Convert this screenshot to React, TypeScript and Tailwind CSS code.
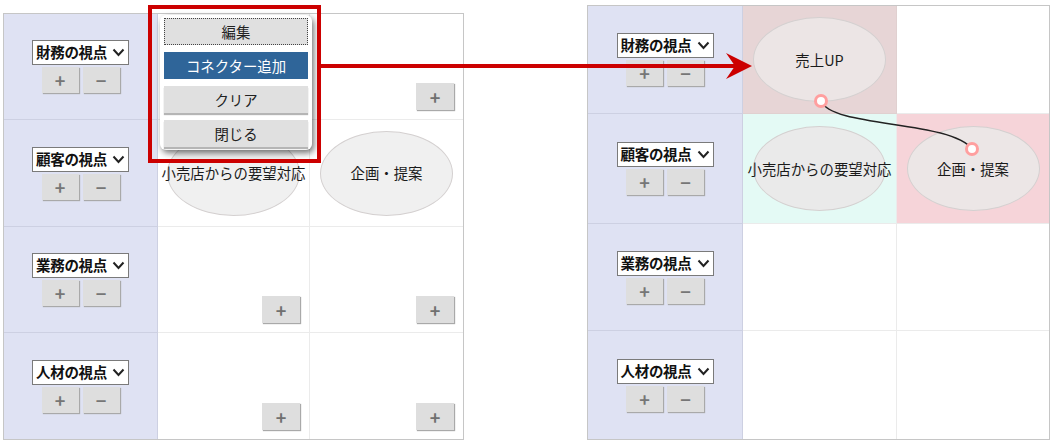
import React from 'react'

const font = { fontFamily: '"Noto Sans CJK JP", "Noto Sans", sans-serif' }

function PerspectiveSelect({ label }: { label: string }) {
  return (
    <div className="flex flex-col items-center">
      <div className="flex h-[25px] w-[97px] items-center justify-between border border-[#7a7a7a] bg-white pl-[3px] pr-[3px] text-[14.5px] font-bold leading-none text-[#111]">
        <span className="tracking-[-0.3px]">{label}</span>
        <svg width="13" height="9" viewBox="0 0 13 9">
          <polyline points="1.5,1.5 6.5,7 11.5,1.5" fill="none" stroke="#222" strokeWidth="2" />
        </svg>
      </div>
      <div className="mt-[2px] flex gap-[4px]">
        <GrayButton glyph="+" />
        <GrayButton glyph="−" />
      </div>
    </div>
  )
}

function GrayButton({ glyph }: { glyph: string }) {
  return (
    <div className="flex h-[26px] w-[37px] items-center justify-center bg-[#dedede] text-[18px] font-bold leading-none text-[#767676] shadow-[1px_1px_1px_#a9a9a9]">
      {glyph}
    </div>
  )
}

function AddButton() {
  return (
    <div className="flex h-[27px] w-[38px] items-center justify-center bg-[#dedede] text-[18px] font-bold leading-none text-[#707070] shadow-[1px_1px_1px_#a9a9a9]">
      +
    </div>
  )
}

function Oval({ text, fill }: { text: string; fill: string }) {
  return (
    <div className="relative flex h-full w-full items-center justify-center">
      <div className={`h-[85px] w-[133px] rounded-[50%] border border-[#d4d0d0] ${fill}`} />
      <span className="absolute whitespace-nowrap text-[14.4px] text-[#1a1a1a]">{text}</span>
    </div>
  )
}

export default function App() {
  const labels = ['財務の視点', '顧客の視点', '業務の視点', '人材の視点']
  const labelCell = 'flex items-center justify-center border-r border-b border-[#cdd0e2] bg-[#dfe2f3]'
  const cell = 'border-r border-b border-[#ebebeb]'
  const addCell = 'flex items-end justify-end pr-[9px] pb-[9px]'

  return (
    <div className="relative flex h-[445px] w-[1054px] items-start gap-[123px] overflow-hidden bg-white pl-[3px]" style={font}>
      {/* before */}
      <div className="mt-[13px] border border-[#c6c6c6]">
        <div className="grid grid-cols-[154px_152px_153px] grid-rows-[106px_107px_106px_106px]">
          <div className={labelCell}><PerspectiveSelect label={labels[0]} /></div>
          <div className={`${cell} ${addCell}`}><AddButton /></div>
          <div className={`${cell} ${addCell} border-r-0`}><AddButton /></div>

          <div className={labelCell}><PerspectiveSelect label={labels[1]} /></div>
          <div className={cell}><Oval text="小売店からの要望対応" fill="bg-[#f0f0f0]" /></div>
          <div className={`${cell} border-r-0`}><Oval text="企画・提案" fill="bg-[#f0f0f0]" /></div>

          <div className={labelCell}><PerspectiveSelect label={labels[2]} /></div>
          <div className={`${cell} ${addCell}`}><AddButton /></div>
          <div className={`${cell} ${addCell} border-r-0`}><AddButton /></div>

          <div className={`${labelCell} border-b-0`}><PerspectiveSelect label={labels[3]} /></div>
          <div className={`${cell} ${addCell} border-b-0`}><AddButton /></div>
          <div className={`${cell} ${addCell} border-r-0 border-b-0`}><AddButton /></div>
        </div>
      </div>

      {/* after */}
      <div className="mt-[5px] border border-[#c6c6c6]">
        <div className="grid grid-cols-[155px_154px_152px] grid-rows-[108px_110px_107px_108px]">
          <div className={labelCell}><PerspectiveSelect label={labels[0]} /></div>
          <div className="border-r border-b border-[#e0d0d0] bg-[#e7d5d6]"><Oval text="売上UP" fill="bg-[#ece5e5]" /></div>
          <div className="border-b border-[#ebebeb]" />

          <div className={labelCell}><PerspectiveSelect label={labels[1]} /></div>
          <div className="border-r border-b border-[#ebebeb] bg-[#e4faf5]"><Oval text="小売店からの要望対応" fill="bg-[#eaeaea]" /></div>
          <div className="border-b border-[#ebebeb] bg-[#f6d4d9]"><Oval text="企画・提案" fill="bg-[#ece6e6]" /></div>

          <div className={labelCell}><PerspectiveSelect label={labels[2]} /></div>
          <div className={cell} />
          <div className="border-b border-[#ebebeb]" />

          <div className={`${labelCell} border-b-0`}><PerspectiveSelect label={labels[3]} /></div>
          <div className="border-r border-[#ebebeb]" />
          <div />
        </div>
      </div>

      {/* context menu */}
      <div className="absolute left-[160px] top-[15px] flex h-[135px] w-[152px] flex-col gap-[7px] rounded-[6px] bg-white px-[4px] pt-[3px] shadow-[2px_3px_6px_rgba(0,0,0,0.55)]">
        <div className="flex h-[27px] items-center justify-center border border-dotted border-[#444] bg-[#e0e0e0] text-[14.4px] text-[#222]">編集</div>
        <div className="flex h-[27px] items-center justify-center bg-[#2f6599] text-[14.4px] text-white">コネクター追加</div>
        <div className="flex h-[27px] items-center justify-center bg-[#e0e0e0] text-[14.4px] text-[#222] shadow-[0_2px_1px_#b5b5b5]">クリア</div>
        <div className="flex h-[27px] items-center justify-center bg-[#e0e0e0] text-[14.4px] text-[#222] shadow-[0_2px_1px_#b5b5b5]">閉じる</div>
      </div>
      <div className="absolute left-[148px] top-[5px] h-[158px] w-[173px] border-4 border-[#cc0000]" />

      {/* arrow + connector drawing */}
      <svg className="pointer-events-none absolute left-0 top-0" width="1054" height="445">
        <line x1="321" y1="66" x2="740" y2="66" stroke="#cc0000" strokeWidth="4" />
        <polygon points="726,53 752,66 726,79 735,66" fill="#cc0000" />
        <path d="M821 101 C 832 128, 950 120, 972 149" fill="none" stroke="#222" strokeWidth="1.4" />
        <circle cx="821" cy="101" r="5.5" fill="#fff" stroke="#ff9f9f" strokeWidth="3" />
        <circle cx="972" cy="149" r="5.5" fill="#fff" stroke="#ff9f9f" strokeWidth="3" />
      </svg>
    </div>
  )
}
